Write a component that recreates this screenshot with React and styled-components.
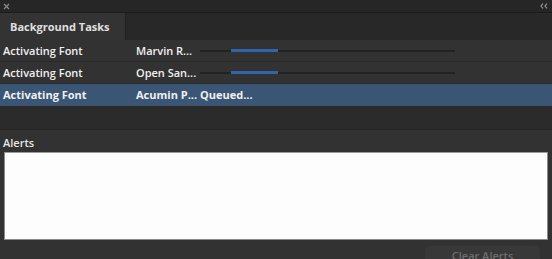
import React from "react";
import styled, { createGlobalStyle } from "styled-components";

const Global = createGlobalStyle`
  html, body { margin: 0; padding: 0; background: #323232; }
  body { width: 552px; height: 259px; overflow: hidden; font-family: "Open Sans", "Liberation Sans", sans-serif; }
`;

const Panel = styled.div`
  width: 552px;
  height: 259px;
  display: flex;
  flex-direction: column;
  background: #323232;
  color: #e6e6e6;
  overflow: hidden;
`;

const TopBar = styled.div`
  height: 12px;
  flex: none;
  background: #262626;
  border-bottom: 1px solid #1c1c1c;
  display: flex;
  align-items: center;
  justify-content: space-between;
  padding: 0 4px 0 3px;
  color: #8a8a8a;
`;

const Icon = styled.svg`
  display: block;
`;

const TabBar = styled.div`
  height: 27px;
  flex: none;
  background: #282828;
  display: flex;
`;

const Tab = styled.div`
  width: 115px;
  padding-left: 10px;
  background: #333333;
  border-right: 1px solid #222;
  display: flex;
  align-items: center;
  font-size: 11px;
  font-weight: 700;
  color: #e0e0e0;
`;

const Row = styled.div`
  height: 21px;
  flex: none;
  display: flex;
  align-items: center;
  background: ${p => (p.$selected ? "#3a5674" : "#323232")};
  border-bottom: 1px solid ${p => (p.$selected ? "#3a5674" : "#2a2a2a")};
  font-size: 11px;
  font-weight: ${p => (p.$selected ? 700 : 600)};
  color: #f0f0f0;
`;

const Name = styled.div`
  width: 133px;
  padding-left: 3px;
  white-space: nowrap;
`;

const FontName = styled.div`
  width: 64px;
  white-space: nowrap;
`;

const Status = styled.div`
  white-space: nowrap;
`;

const Track = styled.div`
  position: relative;
  width: 255px;
  height: 2px;
  background: #222222;
  margin-top: 1px;
`;

const Fill = styled.div`
  position: absolute;
  top: -1px;
  height: 3px;
  background: #2f66aa;
`;

const Empty = styled.div`
  height: 23px;
  flex: none;
  background: #2b2b2b;
  border-bottom: 1px solid #262626;
`;

const Alerts = styled.div`
  flex: 1;
  display: flex;
  flex-direction: column;
  padding: 4px 4px 0 4px;
`;

const Label = styled.div`
  font-size: 11px;
  font-weight: 600;
  color: #e6e6e6;
  height: 18px;
  line-height: 18px;
  margin-left: -1px;
`;

const Box = styled.div`
  height: 86px;
  background: #fdfdfd;
  border: 1px solid #8a8a8a;
  border-top-color: #9a9a9a;
`;

const Footer = styled.div`
  display: flex;
  justify-content: flex-end;
  padding: 6px 8px 0 0;
`;

const Button = styled.div`
  width: 115px;
  height: 22px;
  border-radius: 5px;
  background: #383838;
  color: #6e6e6e;
  font-size: 11px;
  font-weight: 600;
  display: flex;
  justify-content: center;
  padding-top: 2px;
  box-sizing: border-box;
`;

const tasks = [
  { font: "Marvin R...", progress: { left: 31, width: 47 } },
  { font: "Open San...", progress: { left: 31, width: 47 } },
  { font: "Acumin P...", status: "Queued...", selected: true },
];

export default function App() {
  return (
    <Panel>
      <Global />
      <TopBar>
        <Icon width="7" height="7" viewBox="0 0 7 7">
          <path d="M1 1L6 6M6 1L1 6" stroke="#8a8a8a" strokeWidth="1.2" fill="none" />
        </Icon>
        <Icon width="8" height="6" viewBox="0 0 8 6">
          <path d="M3 0.5L1 3L3 5.5M7 0.5L5 3L7 5.5" stroke="#9a9a9a" strokeWidth="1.2" fill="none" />
        </Icon>
      </TopBar>
      <TabBar>
        <Tab>Background Tasks</Tab>
      </TabBar>
      {tasks.map((t, i) => (
        <Row key={i} $selected={t.selected}>
          <Name>Activating Font</Name>
          <FontName>{t.font}</FontName>
          {t.progress ? (
            <Track>
              <Fill style={{ left: t.progress.left, width: t.progress.width }} />
            </Track>
          ) : (
            <Status>{t.status}</Status>
          )}
        </Row>
      ))}
      <Empty />
      <Alerts>
        <Label>Alerts</Label>
        <Box />
        <Footer>
          <Button>Clear Alerts</Button>
        </Footer>
      </Alerts>
    </Panel>
  );
}
